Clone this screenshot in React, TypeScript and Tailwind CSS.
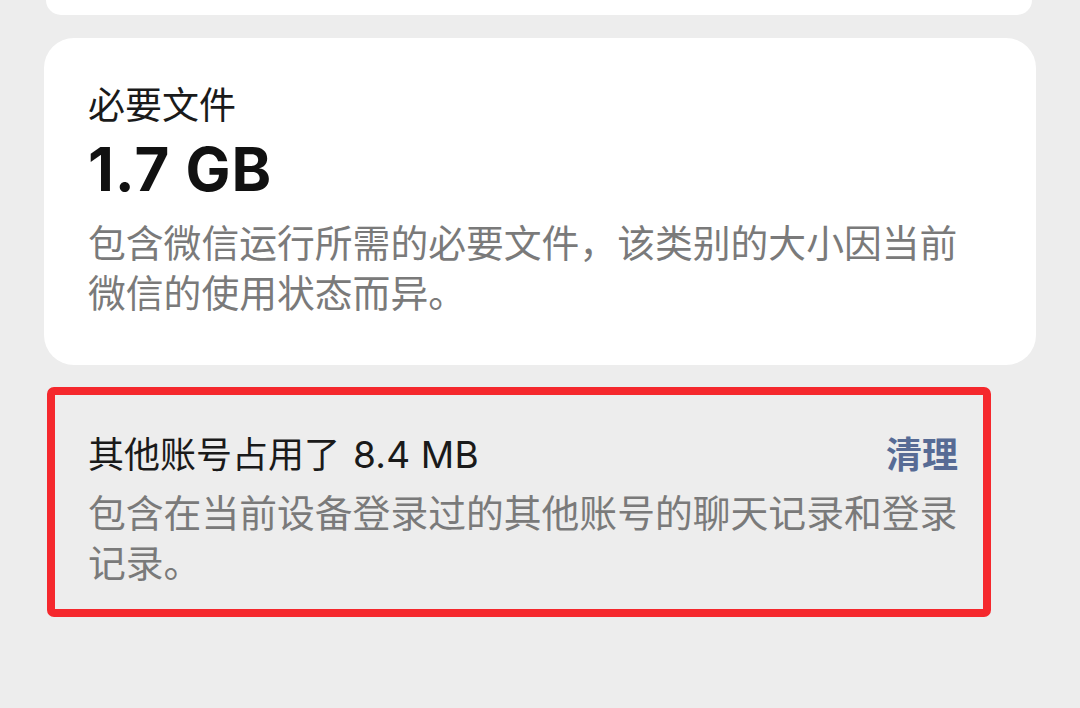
export default function App() {
  const font = { fontFamily: 'Inter, "Noto Sans CJK SC", "Noto Sans", sans-serif' };
  return (
    <div className="w-[1080px] h-[708px] overflow-hidden bg-[#ededed]" style={font}>
      {/* tail of the card above */}
      <div className="ml-[46px] w-[986px] h-[15px] bg-white rounded-b-[28px]" />

      <div className="mt-[23px] ml-[44px] w-[992px] h-[327px] bg-white rounded-[30px] pl-[44px] pt-[44px]">
        <div className="text-[37px] leading-[48px] text-[#1a1a1a]">必要文件</div>
        <div className="mt-[8px] text-[60px] leading-[62px] font-bold tracking-[1px] text-[#111]">1.7 GB</div>
        <div className="mt-[18px] w-[880px] text-[37.8px] leading-[50px] text-[#7a7a7a]">
          包含微信运行所需的必要文件，该类别的大小因当前微信的使用状态而异。
        </div>
      </div>

      <div className="mt-[22px] ml-[47px] w-[944px] h-[230px] border-[8px] border-[#f5282d] rounded-[7px] pl-[33px] pr-[25px] pt-[36px]">
        <div className="flex items-center justify-between">
          <div className="text-[36px] leading-[48px] text-[#1a1a1a]">
            其他账号占用了<span className="ml-[13px] text-[37px] tracking-[0.2px]">8.4 MB</span>
          </div>
          <div className="text-[36px] leading-[48px] font-bold text-[#576b95]">清理</div>
        </div>
        <div className="mt-[9px] w-[880px] text-[37.8px] leading-[50px] text-[#7a7a7a]">
          包含在当前设备登录过的其他账号的聊天记录和登录记录。
        </div>
      </div>
    </div>
  );
}
